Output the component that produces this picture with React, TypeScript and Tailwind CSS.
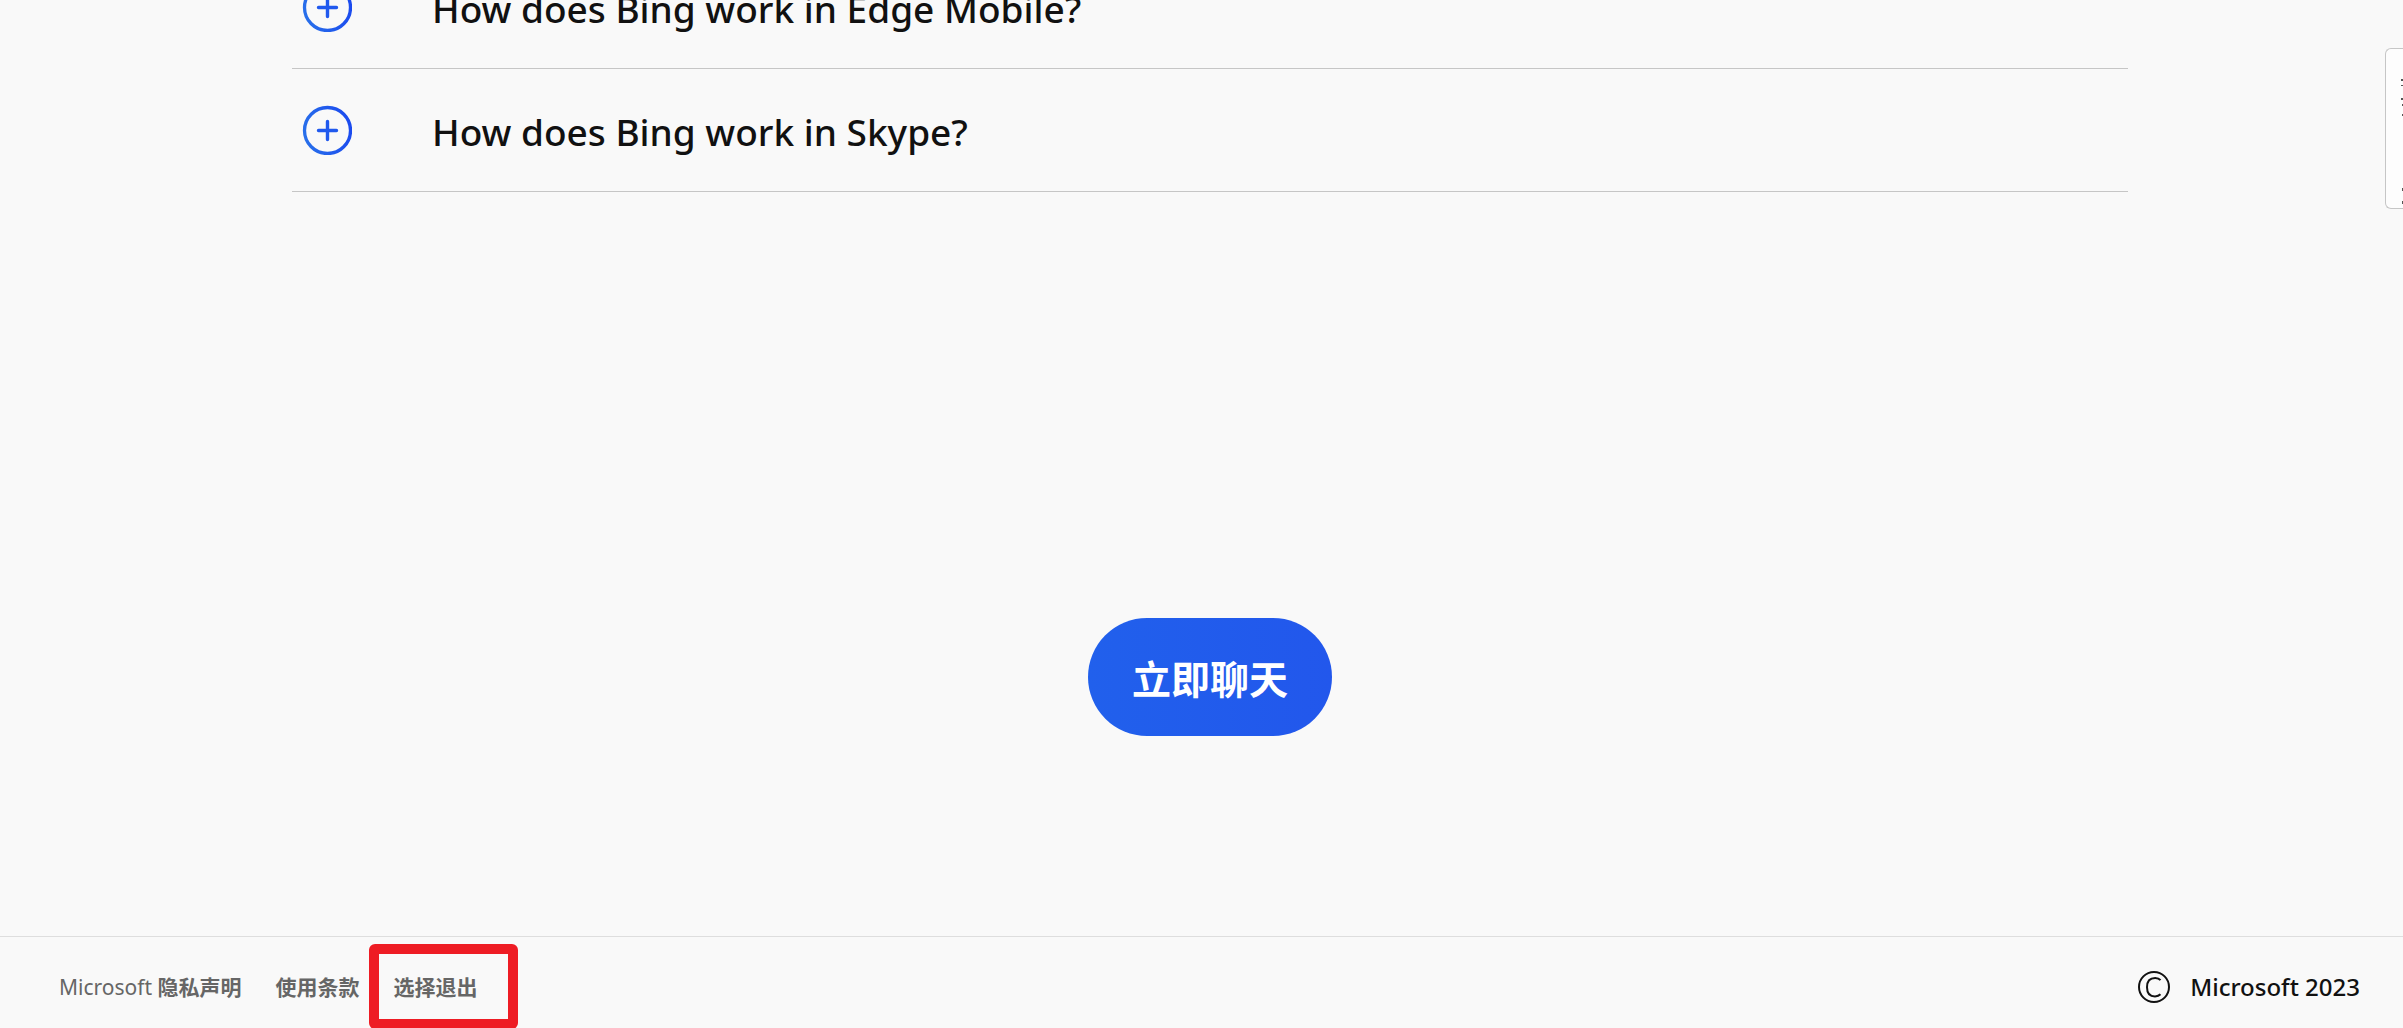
import React from "react";

function PlusIcon({ id }: { id: string }) {
  return (
    <svg viewBox="0 0 50 50" className="size-[50px] shrink-0" fill="none" aria-hidden="true">
      <defs>
        <linearGradient id={id} gradientUnits="userSpaceOnUse" x1="0" y1="30" x2="50" y2="20">
          <stop offset="0" stopColor="#2870ea" />
          <stop offset="1" stopColor="#1b4aef" />
        </linearGradient>
      </defs>
      <circle cx="25.5" cy="25.5" r="23" stroke={`url(#${id})`} strokeWidth="3.3" />
      <path d="M16.5 25.5H34.5M25.5 16.5V34.5" stroke="#2059ee" strokeWidth="3.4" strokeLinecap="round" />
    </svg>
  );
}

const questions = ["How does Bing work in Edge Mobile?", "How does Bing work in Skype?"];

export default function App() {
  return (
    <div className="relative flex h-screen flex-col overflow-hidden bg-[#f9f9f9] font-['Noto_Sans','Noto_Sans_CJK_SC',sans-serif] text-[#111]">
      <section className="mr-[275px] ml-[292px] flex h-48 shrink-0 flex-col justify-end overflow-hidden">
        {questions.map((q, i) => (
          <div key={q} className="h-[123px] shrink-0 border-b border-[#c6c6c6]">
            <button type="button" aria-expanded="false" className="flex h-full w-full items-center gap-20 pl-[10px] text-left">
              <PlusIcon id={`plus-${i}`} />
              <span className="pt-1 text-[37px] leading-[48px] font-medium whitespace-nowrap">{q}</span>
            </button>
          </div>
        ))}
      </section>

      <main className="flex flex-1 items-end justify-center pb-[200px] pl-[17px]">
        <button
          type="button"
          className="flex h-[118px] items-center rounded-full bg-linear-to-r from-[#2160ec] to-[#2257ec] px-11 pt-1 text-[39px] leading-[48px] font-bold text-white"
        >
          立即聊天
        </button>
      </main>

      <footer className="flex h-[92px] shrink-0 items-center justify-between border-t border-[#dedede] pt-2 pr-[43px] pl-[59px]">
        <nav className="flex items-center gap-[34px] text-[21px] leading-7 text-[#666]">
          <a href="#privacy" className="whitespace-nowrap">
            Microsoft <span className="font-bold">隐私声明</span>
          </a>
          <a href="#terms" className="font-bold whitespace-nowrap">使用条款</a>
          <a href="#opt-out" className="relative font-bold whitespace-nowrap">
            选择退出
            <span className="pointer-events-none absolute -top-[29px] -right-10 -left-[25px] h-[85px] rounded-md border-10 border-[#ee1c24]" />
          </a>
        </nav>
        <p className="flex items-center gap-5 text-[24px] leading-8 font-medium whitespace-nowrap">
          <svg viewBox="0 0 32 32" className="size-8" fill="none" stroke="#111" aria-label="Copyright" role="img">
            <circle cx="16" cy="16" r="15" strokeWidth="2" />
            <path d="M22.5 9.2C21.3 7.7 19.5 7 17.2 7C12 7 9 10.5 9 16.2C9 22 12 25.4 17 25.4C19.4 25.4 21.2 24.7 22.5 23.3" strokeWidth="2" />
          </svg>
          Microsoft 2023
        </p>
      </footer>

      <aside className="absolute top-12 right-0 h-[161px] w-[18px] overflow-hidden rounded-l-md border border-r-0 border-[#c6c6c6] bg-[#fdfdfd]">
        <svg viewBox="0 0 17 159" className="h-[159px] w-[17px]" fill="#555" aria-hidden="true">
          <path d="M15 30h2v2h-2zM15 36h2v1h-2zM15 49h2v2h-2zM16 55h1v2h-1zM16 65h1v2h-1zM16 139h1v3h-1zM16 152h1v3h-1z" />
        </svg>
      </aside>
    </div>
  );
}
